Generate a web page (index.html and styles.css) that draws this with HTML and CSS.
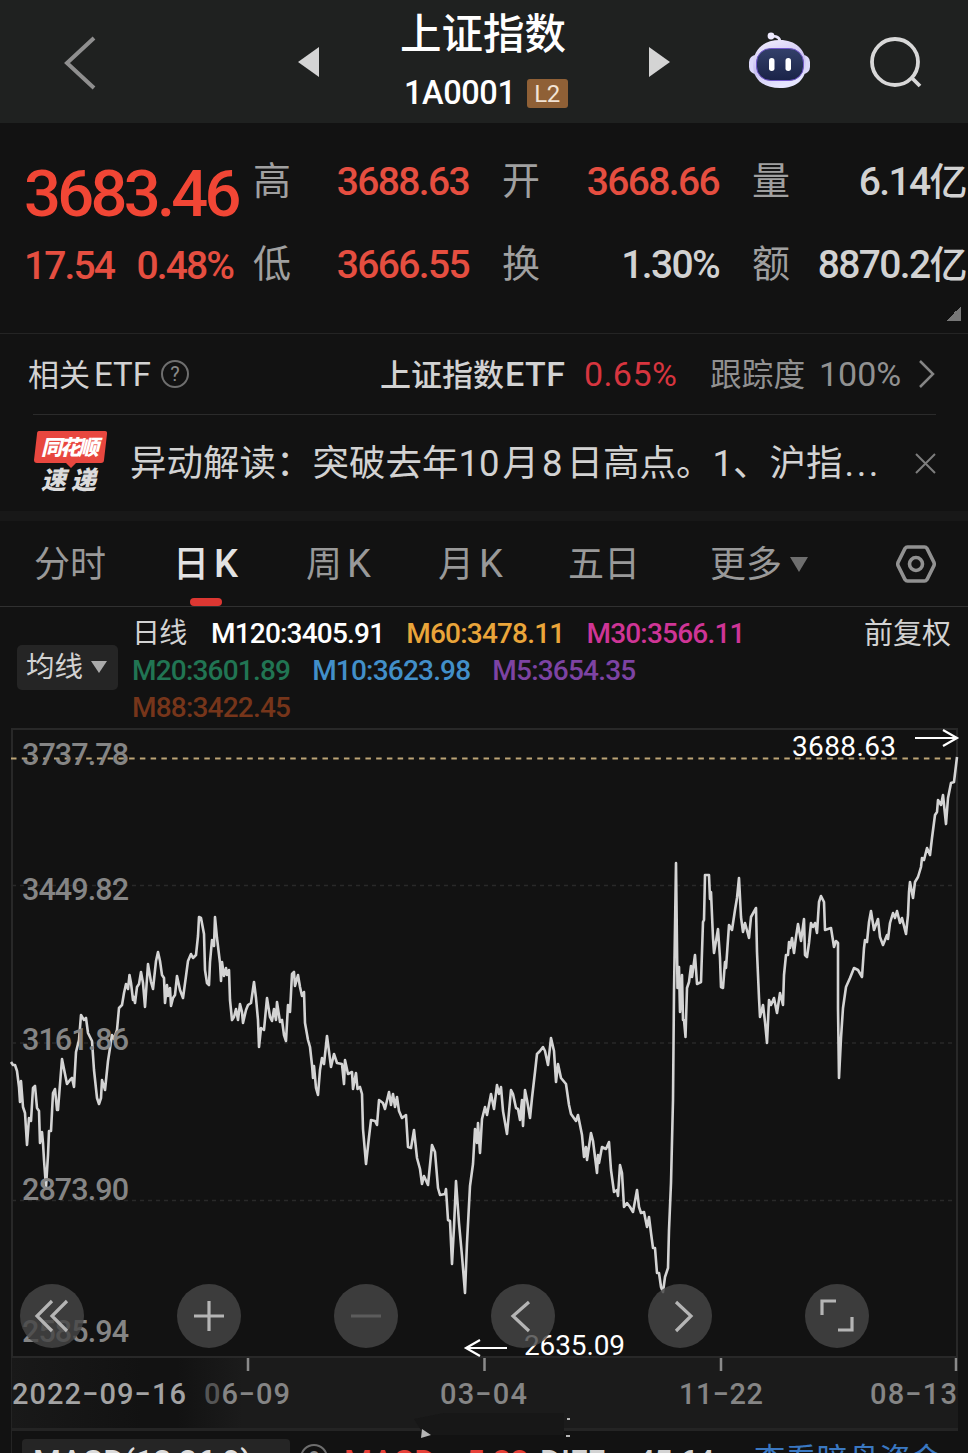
FILE: index.html
```
<!DOCTYPE html>
<html lang="zh-CN">
<head>
    <meta charset="utf-8" />
    <meta name="viewport" content="width=device-width, initial-scale=1.0" />
    <link rel="stylesheet" href="styles.css">
    <title>上证指数</title>
</head>
<body>
    <header class="topbar">
        <svg class="back" width="32" height="54" viewBox="0 0 32 54"><path d="M30 2 L3 27 L30 52" /></svg>
        <svg class="prev" width="21" height="30" viewBox="0 0 21 30"><path d="M21 0 V30 L0 15z" /></svg>
        <div class="title">
            <h1>上证指数</h1>
            <div class="code"><span>1A0001</span><span class="level">L2</span></div>
        </div>
        <svg class="next" width="21" height="30" viewBox="0 0 21 30"><path d="M0 0 V30 L21 15z" /></svg>
        <svg class="robot" width="62" height="58" viewBox="0 0 62 58">
            <defs>
                <linearGradient id="shell" x1="0" y1="0" x2="0.3" y2="1">
                    <stop offset="0" stop-color="#f4f0ff" />
                    <stop offset="0.6" stop-color="#c9c0f2" />
                    <stop offset="1" stop-color="#e6e6ff" />
                </linearGradient>
                <linearGradient id="visor" x1="0" y1="0" x2="0" y2="1">
                    <stop offset="0" stop-color="#33406a" />
                    <stop offset="1" stop-color="#1a2348" />
                </linearGradient>
            </defs>
            <path d="M31 12 Q32 4 23 4" fill="none" stroke="#e9e4fb" stroke-width="2.600" />
            <circle cx="22" cy="4" r="3.4" fill="#eeeaff" />
            <rect x="0" y="23" width="61" height="19" rx="7" fill="#dcd8fa" />
            <path d="M31 8 C46 8 57 17 57 33 C57 48 47 56 31 56 C15 56 4 48 4 33 C4 17 15 8 31 8z" fill="url(#shell)" />
            <rect x="7.500" y="16.500" width="47" height="32" rx="14" fill="url(#visor)" stroke="#7258cc" stroke-width="1" />
            <rect x="20" y="26" width="5.5" height="13" rx="2.7" fill="#fff" />
            <rect x="36.500" y="26" width="5.5" height="13" rx="2.7" fill="#fff" />
        </svg>
        <svg class="search" width="53" height="53" viewBox="0 0 53 53"><circle cx="26" cy="25" r="23" /><path d="M42 40 L51 49" /></svg>
    </header>

    <section class="quote">
        <div class="last">
            <div class="price">3683.46</div>
            <div class="change"><span>17.54</span><span>0.48%</span></div>
        </div>
        <div class="stats">
            <span class="label">高</span><span class="val up">3688.63</span>
            <span class="label">开</span><span class="val up">3668.66</span>
            <span class="label">量</span><span class="val">6.14<i>亿</i></span>
            <span class="label">低</span><span class="val up">3666.55</span>
            <span class="label">换</span><span class="val">1.30%</span>
            <span class="label">额</span><span class="val">8870.2<i>亿</i></span>
        </div>
        <div class="corner"></div>
    </section>

    <section class="etf">
        <span class="etf-title">相关<b>ETF</b></span>
        <span class="help">?</span>
        <span class="etf-name">上证指数<b>ETF</b></span>
        <span class="etf-pct">0.65%</span>
        <span class="etf-track">跟踪度</span>
        <span class="etf-full">100%</span>
        <svg width="18" height="30" viewBox="0 0 18 30"><path d="M2 2 L15 15 L2 28" /></svg>
    </section>

    <section class="news">
        <svg class="flash" width="74" height="64" viewBox="0 0 74 64">
            <path d="M5 0 H71 Q73.500 0 73 3 L70 29 Q70 32 67 32 H42 L37 37 L32 32 H3 Q0 32 0 29 L3 3 Q3 0 5 0z" fill="#e8473f" />
            <text x="7" y="24" textLength="58" class="flash-top">同花顺</text>
            <text x="7" y="58" textLength="25" lengthAdjust="spacingAndGlyphs" class="flash-bottom">速</text>
            <text x="37" y="58" textLength="25" lengthAdjust="spacingAndGlyphs" class="flash-bottom">递</text>
        </svg>
        <p>异动解读：突破去年<b>10</b>月<b>8</b>日高点。1、沪指<em>...</em></p>
        <svg class="close" width="21" height="21" viewBox="0 0 21 21"><path d="M1 1 L20 20 M20 1 L1 20" /></svg>
    </section>

    <nav class="tabs">
        <span>分时</span>
        <span class="active">日<b>K</b></span>
        <span>周<b>K</b></span>
        <span>月<b>K</b></span>
        <span>五日</span>
        <span class="more">更多</span>
        <svg width="40" height="38" viewBox="0 0 40 38">
            <path d="M11.500 2 H28.500 Q30 2 31 3.500 L38 17.500 Q38.500 19 38 20.500 L31 34.500 Q30 36 28.500 36 H11.500 Q10 36 9 34.500 L2 20.500 Q1.500 19 2 17.500 L9 3.500 Q10 2 11.500 2z" />
            <circle cx="20" cy="19" r="6.500" />
        </svg>
    </nav>

    <section class="ma">
        <div class="ma-btn">均线</div>
        <div class="ma-list">
            <div><span class="kind">日线</span><span class="m120">M120:3405.91</span><span class="m60">M60:3478.11</span><span class="m30">M30:3566.11</span></div>
            <div><span class="m20">M20:3601.89</span><span class="m10">M10:3623.98</span><span class="m5">M5:3654.35</span></div>
            <div><span class="m88">M88:3422.45</span></div>
        </div>
        <div class="adjust">前复权</div>
    </section>

    <section class="chart">
        <svg class="plot" width="968" height="630" viewBox="0 728 968 630">
            <path class="frame" d="M12 1358 V729 H957 V1358 M12 1357 H957" />
            <path class="grid" d="M12 885.500 H957 M12 1043 H957 M12 1200.500 H957" />
            <path class="now" d="M11 758.500 H957" />
            <polyline class="line" points="11,1062 13,1065 15,1065 17,1071 19,1087 20,1102 21,1081 23,1107 25,1113 27,1145 29,1118 31,1121 33,1088 35,1086 37,1108 39,1111 40,1143 42,1132 43,1143 44,1160 46,1187 48,1155 49,1131 51,1131 53,1093 55,1089 57,1110 58,1110 60,1084 62,1059 64,1069 67,1084 70,1080 72,1078 74,1087 76,1052 79,1040 81,1015 84,1020 86,1018 88,1033 92,1041 94,1070 97,1098 99,1104 101,1098 102,1080 105,1090 108,1061 112,1035 114,1039 117,1030 119,1008 122,1005 124,993 126,984 128,989 129.5,975 131,983 133,1000 134,997 135,1003 137,987 139,984 141,972 143,983 145,1007 148,964 151,982 153,989 156,961 158,952 160,961 162,975 164,978 165,1003 167,985 168,996 170,988 171,1006 173,998 175,995 177,976 180,990 183,998 186,976 188,961 191,954 193,958 196,955 198,936 199,917 201,918 204,934 205,970 207,983 209,985 210,962 212,940 214,946 215,917 217,938 220,963 221,981 222,962 224,976 226,968 227,975 229,970 230,1000 232,1020 234,1017 236,1009 238,1020 240,1004 242,1012 243,1023 246,1010 248,1005 251,1003 254,982 256,998 258,1020 259,1047 261,1028 264,1030 267,998 270,1017 272,1021 274,1009 276,1020 277,1002 280,1022 282,1020 284,1035 286,1041 288,1005 290,1012 292,974 294,972 295,986 298,975 300,987 302,996 304,992 305,1023 308,1040 310,1047 312,1065 313,1078 314,1066 316,1088 318,1095 320,1070 322,1058 324,1064 327,1036 331,1067 334,1054 337,1063 342,1064 344,1084 345,1060 348,1074 352,1072 353,1089 356,1073 357.5,1089 360,1087 362,1094 363,1129 366,1164 369,1137 371,1120 375,1121 377,1125 379,1100 383,1103 385,1109 389,1092 391,1105 393,1094 395,1107 397,1097 399,1111 402,1118 406,1115 408,1147 411,1148 414,1130 417,1158 420,1169 422,1184 424,1176 428,1185 432,1145 435,1152 438,1188 440,1195 445,1194 446,1189 448,1220 450,1221 452,1264 454,1227 456,1181 459,1223 462,1256 465,1293 467,1243 470,1186 473,1164 475,1129 477,1143 478,1123 480,1153 482,1119 485,1107 487,1115 491,1094 494,1109 497,1085 499,1094 501,1087 503,1111 507,1134 511,1090 513,1094 516,1108 518,1109 520,1120 522,1100 523,1126 525,1090 527,1100 530,1118 532,1098 535,1072 537,1054 540,1051 543,1047 545,1051 548,1065 551,1038 554,1051 556,1082 558,1064 561,1078 566,1084 569,1105 571,1114 576,1121 578,1115 582,1135 584,1157 586,1147 587,1160 591,1133 593,1141 597,1173 598,1155 599,1163 602,1147 606,1149 609,1142 611,1170 614,1192 617,1190 618,1196 620,1165 622,1173 624,1207 627,1203 630,1207 633,1212 637,1190 639,1207 641,1213 644,1212 647,1227 649,1217 651,1233 653,1248 655,1248 657,1273 659,1273 661,1287 663,1292 665,1277 668,1268 669,1230 671,1183 673,1100 674,992 676,863 677.5,988 679,967 680,1012 682,975 683,1020 684,1020 685.5,1037 687,988 689,982 691,966 692,977 695,955 697,984 701,982 703,922 704,920 705,875 709,875 710,899 711,892 713,938 714,953 718,929 720,958 721,987 723,988 725,962 726,968 729,925 732,930 735,910 737,898 739,878 741,917 743,932 745,923 749,938 751,917 756,908 757,952 759,998 760,1017 763,1005 765,1022 767,1043 769,1000 771,1005 774,998 777,1013 780,993 783,1005 784,975 786,955 788,955 789,942 790,948 792,938 794,953 796,937 798,924 801,941 804,919 805,955 807,957 809,943 811,923 813,927 815,923 817,933 819,902 821,896 824,902 825,930 831,928 834,947 836,941 838,943 838,1008 839,1078 841,1038 843,1008 846,987 850,978 854,968 858,970 862,977 864,948 865,940 867,942 869,922 871,911 874,930 878,919 880,937 883,945 887,935 888,939 890,923 893,913 895,918 897,911 900,923 902,918 906,934 908,915 909,892 910,882 913,898 915,882 918,877 921,867 922,858 924,860 927,848 930,855 932,838 935,815 937,812 938,800 941,805 943,795 946,824 948,798 951,783 954,782 957,757" />
            <g class="axis">
                <text x="22" y="765" textLength="107">3737.78</text>
                <text x="22" y="900" textLength="107">3449.82</text>
                <text x="22" y="1050" textLength="107">3161.86</text>
                <text x="22" y="1200" textLength="107">2873.90</text>
                <text x="22" y="1342" textLength="107">2585.94</text>
            </g>
            <g class="mark">
                <text x="792" y="756" textLength="104">3688.63</text>
                <path d="M915 738 H956 M943 730 L957 738 L943 746" />
                <text x="524" y="1355" textLength="101">2635.09</text>
                <path d="M507 1348 H466 M480 1340 L466 1348 L480 1356" />
            </g>
        </svg>
        <div class="controls">
            <svg viewBox="0 0 64 64"><path d="M32 17 L17 32 L32 47 M47 17 L32 32 L47 47" /></svg>
            <svg viewBox="0 0 64 64"><path d="M17 32 H47 M32 17 V47" /></svg>
            <svg class="off" viewBox="0 0 64 64"><path d="M17 32 H47" /></svg>
            <svg viewBox="0 0 64 64"><path d="M38 18 L22 32 L38 47" /></svg>
            <svg viewBox="0 0 64 64"><path d="M28 18 L43 32 L28 47" /></svg>
            <svg viewBox="0 0 64 64"><path d="M31 17 H17 V31 M33 46 H47 V33" /></svg>
        </div>
    </section>

    <section class="dates">
        <svg width="968" height="70" viewBox="0 1358 968 70">
            <path class="ticks" d="M248 1358 V1371 M484.500 1358 V1371 M721 1358 V1371 M956 1358 V1371" />
            <text x="12" y="1404" textLength="174" class="first">2022−09−16</text>
            <text x="204" y="1404" textLength="86"><tspan class="dim">0</tspan>6−09</text>
            <text x="440" y="1404" textLength="87">03−04</text>
            <text x="679" y="1404" textLength="84">11−22</text>
            <text x="870" y="1404" textLength="87">08−13</text>
        </svg>
        <!-- half hidden drag handle -->
        <svg class="smudge" width="170" height="36" viewBox="0 0 170 36">
            <path class="shade" d="M10 12 L40 6 H160 V28 H20z" />
            <path class="speck" d="M18 22 L27 28 L17 31z M163 11 h3 v2 h-3z M162 28 h4 v2 h-4z" />
        </svg>
    </section>

    <section class="macd">
        <div class="macd-btn">MACD(12,26,9)</div>
        <div class="macd-help">?</div>
        <span class="macd-name">MACD:</span>
        <span class="macd-val">−5.88</span>
        <span class="diff-name">DIFF:</span>
        <span class="diff-val">45.64</span>
        <span class="dark">查看暗盘资金</span>
    </section>
</body>
</html>
```
FILE: styles.css
```
* {
    box-sizing: border-box;
}

body {
    margin: 0;
    width: 968px;
    height: 1453px;
    overflow: hidden;
    background-color: #121212;
    color: #d2d2d2;
    font-family: Roboto, "Noto Sans CJK SC", sans-serif;
    white-space: nowrap;
}

svg {
    display: block;
    flex: none;
    fill: none;
}

i, em {
    font-style: normal;
}

b {
    font-weight: inherit;
}

/* top bar */
.topbar {
    display: flex;
    height: 123px;
    padding-left: 64px;
    background-color: #1f2120;
}

.back {
    margin-top: 36px;
    stroke: #8f8f8f;
    stroke-width: 4;
}

.prev, .next {
    margin-top: 47px;
    fill: #d4d4d4;
}

.prev {
    margin-left: 202px;
}

.title {
    width: 168px;
    margin-left: 81px;
    color: #fff;
}

.title h1 {
    margin: 5px 0 0;
    font-size: 41.500px;
    font-weight: 500;
    line-height: 60px;
}

.code {
    display: flex;
    align-items: center;
    height: 56px;
    padding-left: 4px;
    font-size: 32.500px;
    font-weight: 500;
    letter-spacing: -0.400px;
}

.level {
    width: 41px;
    height: 29px;
    margin-left: 11px;
    border-radius: 3px;
    background-color: #8f6036;
    color: #f2e3d4;
    font-size: 24px;
    font-weight: 400;
    line-height: 30px;
    text-align: center;
}

.next {
    margin-left: 81px;
}

.robot {
    margin: 32px 0 0 79px;
}

.search {
    margin: 37px 0 0 58px;
    stroke: #d8d8d8;
    stroke-width: 3.800;
}

/* quote */
.quote {
    position: relative;
    display: flex;
    height: 211px;
    padding: 16px 0 0 24px;
    border-bottom: 1px solid #242424;
}

.last {
    width: 229px;
    color: #f14635;
}

.price {
    height: 84px;
    padding-top: 13px;
    font-size: 65px;
    font-weight: 500;
    line-height: 84px;
    letter-spacing: -3.700px;
}

.change {
    display: flex;
    justify-content: space-between;
    width: 209px;
    font-size: 39px;
    font-weight: 500;
    line-height: 86px;
    letter-spacing: -1.900px;
    color: #e54e40;
}

.stats {
    display: grid;
    grid-template-columns: 38px 178px 71px 179px 71px 177px;
    grid-template-rows: 83px 83px;
    line-height: 87px;
    font-size: 39px;
}

.label {
    font-size: 38px;
    line-height: 84px;
    color: #a0a0a0;
}

.label:nth-child(6n+3), .label:nth-child(6n+5) {
    padding-left: 33px;
}

.val {
    text-align: right;
    font-weight: 500;
    letter-spacing: -1.650px;
}

.val i {
    font-size: 38px;
    letter-spacing: -0.500px;
}

.up {
    color: #e54e40;
}

.corner {
    position: absolute;
    right: 7px;
    bottom: 12px;
    width: 15px;
    height: 15px;
    background: linear-gradient(135deg, transparent 50%, #777 50%);
}

/* related etf */
.etf {
    display: flex;
    align-items: center;
    height: 81px;
    margin: 0 32px 0 33px;
    border-bottom: 1px solid #2b2b2b;
    font-size: 31px;
}

.etf-title, .etf-name, .etf-track {
    padding-bottom: 4px;
}

.etf-title {
    width: 124px;
    margin-left: -5px;
}

.etf-title b {
    margin-left: 4px;
    font-size: 33px;
}

.help {
    width: 28px;
    height: 28px;
    margin-left: 9px;
    border: 2px solid #6e6e6e;
    border-radius: 50%;
    color: #888;
    font-size: 20px;
    line-height: 25px;
    text-align: center;
}

.etf-name {
    width: 204px;
    margin-left: 191px;
    font-weight: 500;
}

.etf-name b {
    margin-left: 1px;
    font-size: 34px;
    letter-spacing: 0.500px;
}

.etf-pct {
    width: 126px;
    color: #d7353f;
    font-size: 34px;
    letter-spacing: 0.400px;
}

.etf-track {
    width: 109px;
    color: #919191;
    font-size: 31.700px;
}

.etf-full {
    width: 99px;
    color: #919191;
    font-size: 34px;
}

.etf svg {
    stroke: #858585;
    stroke-width: 2.500;
}

/* news */
.news {
    display: flex;
    align-items: center;
    height: 106px;
    padding-left: 34px;
    border-bottom: 10px solid #181818;
}

.flash-top, .flash-bottom {
    font-family: "Noto Sans CJK SC", sans-serif;
    font-weight: 900;
    font-style: italic;
    font-size: 21px;
    fill: #fff;
}

.flash-bottom {
    font-size: 25px;
    fill: #dcdcdc;
}

.news p {
    width: 786px;
    margin: 0 0 0 22px;
    padding-bottom: 6px;
    font-size: 36.500px;
}

.news p b {
    margin-right: 3px;
}

.news p b + b {
    margin-left: 3px;
    margin-right: 4px;
}

.news em {
    margin-left: 2px;
    letter-spacing: 2.500px;
}

.close {
    margin-left: -1px;
    stroke: #7d7d7d;
    stroke-width: 2;
}

/* period tabs */
.tabs {
    display: grid;
    grid-template-columns: 143px 129px 132px 130px 142px 186px 40px;
    align-items: center;
    height: 86px;
    padding-left: 34px;
    border-bottom: 1px solid #303030;
    color: #999;
    font-size: 36px;
}

.tabs span {
    position: relative;
    padding-bottom: 6px;
}

.tabs b {
    margin-left: 5px;
    font-size: 38px;
}

.tabs .active {
    margin-left: -4px;
    color: #e2e2e2;
    font-weight: 500;
}

.active::after {
    content: "";
    position: absolute;
    left: 17px;
    bottom: -13px;
    width: 32px;
    height: 8px;
    border-radius: 4px;
    background-color: #dc3732;
}

.more::after, .ma-btn::after {
    content: "";
    display: inline-block;
    margin-left: 8px;
    border: 9.500px solid transparent;
    border-top: 15px solid #6e6e6e;
    border-bottom: 0;
    vertical-align: 5px;
}

.tabs svg {
    stroke: #919191;
    stroke-width: 3.600;
}

/* moving averages */
.ma {
    display: flex;
    height: 121px;
    font-size: 28px;
}

.ma-btn {
    width: 101px;
    height: 45px;
    margin: 38px 14px 0 17px;
    padding-left: 9px;
    border-radius: 5px;
    background-color: #252525;
    font-size: 28.500px;
    line-height: 45px;
}

.ma-btn::after {
    border-width: 12px 8px 0;
    border-top-color: #aaa;
    vertical-align: 4px;
}

.ma-list {
    width: 732px;
    padding-top: 8px;
    font-weight: 500;
    line-height: 37px;
    letter-spacing: -0.800px;
}

.ma-list div {
    display: flex;
    gap: 22px;
    height: 37px;
}

.kind {
    width: 57px;
    font-weight: 400;
}

.m120 { color: #fff; }
.m60 { color: #eaa53a; }
.m30 { color: #cf3596; }
.m20 { color: #217553; }
.m10 { color: #428fc9; }
.m5 { color: #7d43a3; }
.m88 { color: #76351a; }

.adjust {
    padding-top: 9px;
    font-size: 29px;
    line-height: 36px;
}

/* chart */
.chart {
    position: relative;
    height: 630px;
}

.frame {
    stroke: #282828;
    stroke-width: 2;
}

.grid {
    stroke: #292929;
    stroke-width: 1.500;
    stroke-dasharray: 4 4;
}

.axis text {
    fill: #858585;
    font-size: 30.500px;
    font-weight: 500;
}

.now {
    stroke: #bda577;
    stroke-width: 1.800;
    stroke-dasharray: 5.500 5.240;
}

.line {
    stroke: #d4d4d4;
    stroke-width: 2.600;
    stroke-linejoin: round;
}

.mark {
    stroke: #fff;
    stroke-width: 2.200;
}

.mark text {
    fill: #fff;
    stroke: none;
    font-size: 28px;
}

/* round buttons lie over the plot */
.controls {
    position: absolute;
    left: 20px;
    bottom: 10px;
    display: flex;
    gap: 93px;
}

.controls svg {
    width: 64px;
    height: 64px;
    border-radius: 50%;
    background-color: rgba(70, 70, 70, 0.820);
    stroke: #b5b5b5;
    stroke-width: 3.200;
}

.controls .off {
    stroke: #5c5c5c;
}

/* date axis */
.dates {
    position: relative;
    height: 73px;
    margin: 0 10px 0 11px;
    border-left: 1px solid #242424;
    border-bottom: 3px solid #242424;
    background: linear-gradient(to right, #191919 0, #121212 130px, #121212 165px, #1b1b1b 230px);
}

.dates svg {
    margin-left: -12px;
}

.dates text {
    fill: #858585;
    font-size: 29px;
    font-weight: 500;
}

.dates .first {
    fill: #a3a3a3;
}

.dates .dim {
    fill: #555;
}

.ticks {
    stroke: #8a8a8a;
    stroke-width: 2.500;
}

.dates .smudge {
    position: absolute;
    left: 392px;
    bottom: -15px;
    margin: 0;
}

.shade {
    fill: #171717;
}

.speck {
    fill: #b5b5b5;
}

/* macd row, cut by the bottom edge */
.macd {
    display: flex;
    height: 22px;
    margin-left: 11px;
    padding-top: 8px;
    border-left: 1px solid #242424;
    font-size: 32px;
    font-weight: 500;
    line-height: 44px;
}

.macd-btn {
    width: 268px;
    height: 45px;
    margin-left: 10px;
    padding-left: 11px;
    border-radius: 4px;
    background-color: #252525;
    color: #dcdcdc;
}

.macd-help {
    width: 28px;
    height: 28px;
    margin: 5px 16px 0 10px;
    border: 2px solid #6e6e6e;
    border-radius: 50%;
    color: #888;
    font-size: 20px;
    line-height: 26px;
    text-align: center;
}

.macd-name {
    width: 105px;
    color: #e54038;
}

.macd-val {
    width: 91px;
    color: #e54038;
    letter-spacing: -0.500px;
}

.diff-name {
    width: 97px;
}

.diff-val {
    width: 117px;
    letter-spacing: -1px;
}

.dark {
    color: #3a78c2;
    font-size: 31.300px;
    font-weight: 400;
}
```
